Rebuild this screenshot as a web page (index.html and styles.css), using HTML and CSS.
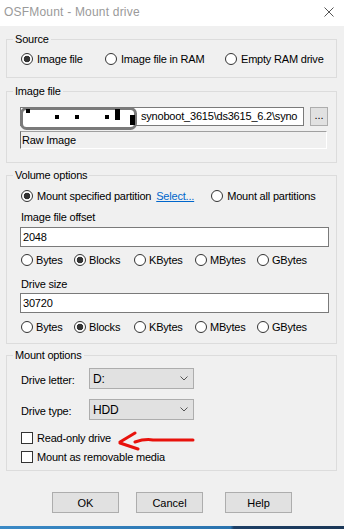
FILE: index.html
```html
<!DOCTYPE html>
<html lang="en">
<head>
    <meta charset="UTF-8">
    <meta name="viewport" content="width=device-width, initial-scale=1.0">
    <title>OSFMount - Mount drive</title>
    <link rel="stylesheet" href="styles.css">
</head>
<body>
    <div class="titlebar">
        <span class="title">OSFMount - Mount drive</span>
        <svg class="close" width="10" height="10" viewBox="0 0 10 10">
            <path d="M0.5 0.5 L9.5 9.5 M9.5 0.5 L0.5 9.5" stroke="#555" stroke-width="1" fill="none"/>
        </svg>
    </div>

    <div class="dialog">
        <fieldset class="group source">
            <legend>Source</legend>
            <div class="group-body src-body">
                <div class="source-row">
                    <label class="opt"><input type="radio" name="src" checked>Image file</label>
                    <label class="opt"><input type="radio" name="src">Image file in RAM</label>
                    <label class="opt"><input type="radio" name="src">Empty RAM drive</label>
                </div>
            </div>
        </fieldset>

        <fieldset class="group image">
            <legend>Image file</legend>
            <div class="group-body img-body">
                <div class="path-row">
                    <div class="path-field">
                        <span class="path-text">synoboot_3615\ds3615_6.2\syno</span>
                        <!-- gizlenmis kisim -->
                        <svg class="redact" width="118" height="24" viewBox="0 0 118 24">
                            <rect x="1.5" y="1.5" width="114" height="20" rx="5" fill="#fff" stroke="#7a7a7a" stroke-width="3"/>
                            <rect x="6" y="2" width="4" height="4" fill="#000"/>
                            <rect x="35" y="8" width="4" height="4" fill="#000"/>
                            <rect x="55" y="8" width="4" height="4" fill="#000"/>
                            <rect x="85" y="8" width="4" height="4" fill="#000"/>
                            <rect x="95" y="2" width="5" height="11" fill="#000"/>
                            <rect x="110" y="8" width="5" height="10" fill="#000"/>
                        </svg>
                    </div>
                    <button class="browse">...</button>
                </div>
                <div class="type-field">Raw Image</div>
            </div>
        </fieldset>

        <fieldset class="group volume">
            <legend>Volume options</legend>
            <div class="group-body vol-body">
                <div class="part-row">
                    <label class="opt"><input type="radio" name="part" checked>Mount specified partition</label>
                    <a class="select-link" href="#">Select...</a>
                    <label class="opt all-part"><input type="radio" name="part">Mount all partitions</label>
                </div>
                <div class="field-label">Image file offset</div>
                <input class="num-input" type="text" value="2048">
                <div class="unit-row">
                    <label class="opt"><input type="radio" name="u1">Bytes</label>
                    <label class="opt"><input type="radio" name="u1" checked>Blocks</label>
                    <label class="opt"><input type="radio" name="u1">KBytes</label>
                    <label class="opt"><input type="radio" name="u1">MBytes</label>
                    <label class="opt"><input type="radio" name="u1">GBytes</label>
                </div>
                <div class="field-label size-label">Drive size</div>
                <input class="num-input size-input" type="text" value="30720">
                <div class="unit-row unit-row2">
                    <label class="opt"><input type="radio" name="u2">Bytes</label>
                    <label class="opt"><input type="radio" name="u2" checked>Blocks</label>
                    <label class="opt"><input type="radio" name="u2">KBytes</label>
                    <label class="opt"><input type="radio" name="u2">MBytes</label>
                    <label class="opt"><input type="radio" name="u2">GBytes</label>
                </div>
            </div>
        </fieldset>

        <fieldset class="group mount">
            <legend>Mount options</legend>
            <div class="group-body mnt-body">
                <div class="combo-row">
                    <span class="combo-label">Drive letter:</span>
                    <div class="combo"><span>D:</span><svg width="8" height="5" viewBox="0 0 8 5"><path d="M0.5 0.5 L4 4 L7.5 0.5" stroke="#555" fill="none"/></svg></div>
                </div>
                <div class="combo-row row2">
                    <span class="combo-label">Drive type:</span>
                    <div class="combo"><span>HDD</span><svg width="8" height="5" viewBox="0 0 8 5"><path d="M0.5 0.5 L4 4 L7.5 0.5" stroke="#555" fill="none"/></svg></div>
                </div>
                <label class="opt check-row first"><input type="checkbox">Read-only drive</label>
                <label class="opt check-row"><input type="checkbox">Mount as removable media</label>
                <svg class="red-arrow" width="80" height="22" viewBox="0 0 80 22">
                    <path d="M3 11 L18 2 M3 12 L21 18 M18 11 C24 9 30 8 36 9 L76 9" stroke="#e8120c" stroke-width="3" stroke-linecap="round" fill="none"/>
                </svg>
            </div>
        </fieldset>

        <div class="buttons">
            <button class="btn">OK</button>
            <button class="btn cancel">Cancel</button>
            <button class="btn help">Help</button>
        </div>
    </div>

    <div class="taskbar"></div>
</body>
</html>
```

FILE: styles.css
```css
body {
    margin: 0;
    height: 529px;
    display: flex;
    flex-direction: column;
    background-color: #f0f0f0;
    font-family: "Liberation Sans", Arial, sans-serif;
    font-size: 11px;
    letter-spacing: -0.2px;
    color: #000;
    overflow: hidden;
}
.titlebar {
    height: 26px;
    flex: none;
    background-color: #fff;
    display: flex;
    align-items: center;
    justify-content: space-between;
    padding: 0 10px 0 4px;
}
.title {
    color: #9a9a9a;
    font-size: 12px;
    letter-spacing: 0.2px;
    margin-top: -2px;
}
.close {
    margin-top: -2px;
}
.dialog {
    flex: 1;
    padding: 0 7px 0 6px;
}
.group {
    margin: 5px 0 0;
    padding: 0;
    border: 1px solid #dcdcdc;
    min-width: 0;
}
.group legend {
    margin-left: 6px;
    padding: 0 2px;
    line-height: 14px;
}
.source { margin-top: 6px; }
.image { margin-top: 6px; }
.mount { margin-top: 4px; }
.group-body {
    padding: 6px 7px 10px 13px;
    position: relative;
}
.src-body { padding-bottom: 11px; }
.img-body { padding-top: 9px; padding-bottom: 13px; }
.vol-body { padding-top: 7px; padding-bottom: 9px; }
.mnt-body { padding-top: 6px; padding-bottom: 6px; }

.opt {
    display: flex;
    align-items: center;
    gap: 4px;
    line-height: 14px;
    white-space: nowrap;
}
input[type=radio] {
    appearance: none;
    box-sizing: border-box;
    margin: 0 0 0 1px;
    width: 12px;
    height: 12px;
    border: 1px solid #333;
    border-radius: 50%;
    background: #fff;
    flex: none;
}
input[type=radio]:checked {
    background: radial-gradient(circle, #333 0 3px, #fff 3.6px);
}
input[type=checkbox] {
    appearance: none;
    box-sizing: border-box;
    margin: 0 0 0 1px;
    width: 12px;
    height: 12px;
    border: 1px solid #333;
    background: #fff;
    flex: none;
}

.source-row {
    display: grid;
    grid-template-columns: 84px 120px auto;
}

.path-row {
    display: flex;
    gap: 6px;
}
.path-field {
    position: relative;
    box-sizing: border-box;
    width: 284px;
    height: 19px;
    border: 1px solid #7a7a7a;
    background: #fff;
    line-height: 17px;
    padding-left: 120px;
    overflow: hidden;
    white-space: nowrap;
}
.redact {
    position: absolute;
    left: -1px;
    top: -1px;
}
.path-field {
    overflow: visible;
}
.browse {
    box-sizing: border-box;
    width: 18px;
    height: 19px;
    padding: 0 0 4px;
    border: 1px solid #adadad;
    background: #e1e1e1;
    font-family: inherit;
    font-size: 11px;
    line-height: 10px;
}
.type-field {
    box-sizing: border-box;
    width: 307px;
    height: 18px;
    margin-top: 5px;
    padding-left: 1px;
    border-top: 1px solid #a0a0a0;
    border-left: 1px solid #6d6d6d;
    border-right: 1px solid #fff;
    border-bottom: 1px solid #fff;
    line-height: 16px;
}

.part-row {
    display: flex;
    align-items: center;
    line-height: 14px;
}
.select-link {
    margin-left: 5px;
    color: #0066cc;
}
.all-part {
    margin-left: 16px;
}
.field-label {
    margin-top: 7px;
    margin-left: 1px;
    line-height: 14px;
}
.size-label {
    margin-top: 10px;
}
.num-input {
    display: block;
    box-sizing: border-box;
    width: 100%;
    height: 20px;
    margin: 3px 0 0;
    padding: 0 2px;
    border: 1px solid #7a7a7a;
    background: #fff;
    font-family: inherit;
    font-size: 11px;
    letter-spacing: -0.2px;
    color: #000;
    outline: none;
}
.size-input {
    margin-top: 2px;
}
.unit-row {
    display: grid;
    grid-template-columns: 53px 60px 61px 62px auto;
    margin-top: 6px;
}
.unit-row .opt {
    gap: 3px;
}
.unit-row2 {
    margin-top: 7px;
}

.combo-row {
    display: flex;
    align-items: center;
}
.row2 {
    margin-top: 10px;
}
.combo-label {
    width: 68px;
    padding: 3px 0 0 1px;
    line-height: 14px;
}
.combo {
    box-sizing: border-box;
    width: 105px;
    height: 21px;
    display: flex;
    align-items: center;
    justify-content: space-between;
    padding: 0 5px 0 3px;
    border: 1px solid #adadad;
    background: #e1e1e1;
    font-size: 12px;
}
.check-row {
    margin-top: 5px;
}
.check-row.first {
    margin-top: 11px;
}
.red-arrow {
    position: absolute;
    left: 110px;
    top: 69px;
}

.buttons {
    display: flex;
    margin-top: 21px;
    padding-left: 46px;
}
.btn {
    box-sizing: border-box;
    width: 67px;
    height: 21px;
    padding: 0;
    border: 1px solid #adadad;
    background: #e1e1e1;
    font-family: inherit;
    font-size: 11px;
    color: #000;
}
.cancel {
    margin-left: 17px;
}
.help {
    margin-left: 22px;
}
.taskbar {
    flex: none;
    height: 3px;
    background: linear-gradient(to right, #3b8ac6 0, #2a73ae 67%, #1d3f66 68%, #1b3757 100%);
}
```
